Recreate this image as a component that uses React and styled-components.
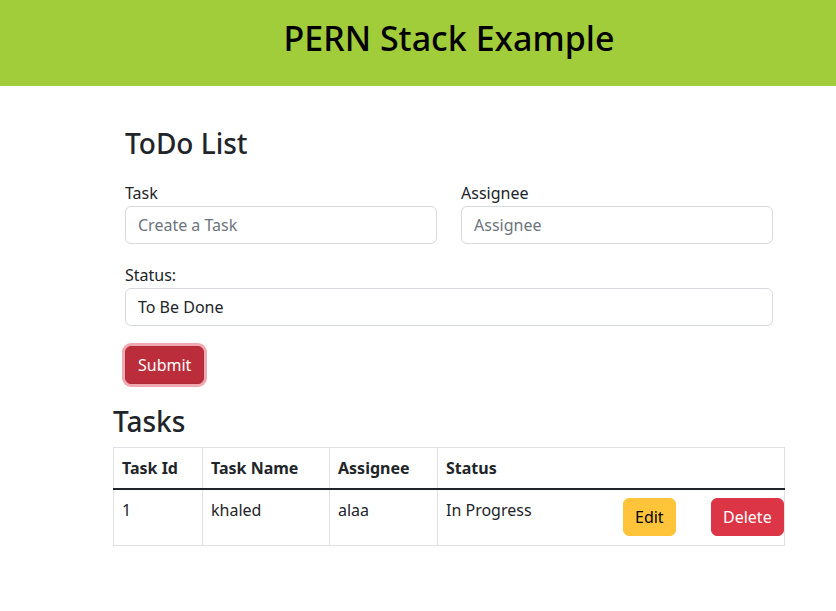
import React from "react";
import styled, { createGlobalStyle } from "styled-components";

const Global = createGlobalStyle`
  html, body { margin: 0; padding: 0; background: #fff; }
  body {
    font-family: "Noto Sans", "Open Sans", sans-serif;
    font-size: 16px;
    line-height: 1.5;
    color: #212529;
  }
  * { box-sizing: border-box; }
`;

const Banner = styled.header`
  height: 86px;
  background: #a2cd3a;
  display: flex;
  align-items: center;
  justify-content: center;
  padding-left: 62px;
  padding-bottom: 10px;
`;

const BannerTitle = styled.h1`
  margin: 0;
  font-size: 34px;
  font-weight: 500;
  line-height: 1.2;
  color: #000;
`;

const Main = styled.main`
  width: 672px;
  margin-left: 113px;
`;

const FormCard = styled.form`
  padding: 41px 12px 0;
`;

const Heading = styled.h3`
  margin: 0 0 ${p => p.$mb || 0}px;
  font-size: 28px;
  font-weight: 500;
  line-height: 1.2;
`;

const FieldRow = styled.div`
  display: grid;
  grid-template-columns: ${p => (p.$cols === 2 ? "1fr 1fr" : "1fr")};
  column-gap: 24px;
  margin-bottom: ${p => p.$mb || 0}px;
`;

const Field = styled.div`
  display: flex;
  flex-direction: column;
`;

const Label = styled.label`
  display: block;
  font-size: 16px;
  line-height: 24px;
  margin-bottom: 1px;
`;

const Input = styled.input`
  height: 38px;
  width: 100%;
  padding: 6px 12px;
  font-family: inherit;
  font-size: 16px;
  color: #212529;
  background: #fff;
  border: 1px solid #d6d9dd;
  border-radius: 6px;
  outline: none;
  &::placeholder { color: #6c757d; }
`;

const Btn = styled.button`
  height: 38px;
  padding: 0 ${p => p.$px || 12}px;
  font-family: inherit;
  font-size: 16px;
  line-height: 24px;
  border-radius: 6px;
  border: 1px solid ${p => p.$border};
  background: ${p => p.$bg};
  color: ${p => p.$fg || "#fff"};
  box-shadow: ${p => (p.$focus ? "0 0 0 3px rgba(225, 83, 97, 0.5)" : "none")};
  cursor: pointer;
`;

const SubmitWrap = styled.div`
  margin-top: 20px;
`;

const TasksSection = styled.section`
  padding-top: 21px;
`;

const Table = styled.table`
  width: 672px;
  border-collapse: collapse;
  margin-top: 9px;
  border: 1px solid #dee2e6;
  table-layout: fixed;
`;

const Th = styled.th`
  text-align: left;
  font-weight: 700;
  padding: 8px;
  line-height: 24px;
  border-left: 1px solid #dee2e6;
  border-bottom: 2px solid #212529;
  width: ${p => (p.$w ? `${p.$w}px` : "auto")};
`;

const Td = styled.td`
  padding: 8px;
  vertical-align: top;
  line-height: 24px;
  border-left: 1px solid #dee2e6;
  height: 56px;
`;

const StatusCell = styled.div`
  display: grid;
  grid-template-columns: 177px 88px auto;
  align-items: start;
`;

export default function App() {
  return (
    <>
      <Global />
      <Banner>
        <BannerTitle>PERN Stack Example</BannerTitle>
      </Banner>
      <Main>
        <FormCard onSubmit={e => e.preventDefault()}>
          <Heading $mb={20}>ToDo List</Heading>
          <FieldRow $cols={2} $mb={19}>
            <Field>
              <Label>Task</Label>
              <Input placeholder="Create a Task" />
            </Field>
            <Field>
              <Label>Assignee</Label>
              <Input placeholder="Assignee" />
            </Field>
          </FieldRow>
          <FieldRow>
            <Field>
              <Label>Status:</Label>
              <Input defaultValue="To Be Done" />
            </Field>
          </FieldRow>
          <SubmitWrap>
            <Btn type="submit" $bg="#bb2d3b" $border="#b02a37" $focus>
              Submit
            </Btn>
          </SubmitWrap>
        </FormCard>
        <TasksSection>
          <Heading>Tasks</Heading>
          <Table>
            <thead>
              <tr>
                <Th $w={89}>Task Id</Th>
                <Th $w={127}>Task Name</Th>
                <Th $w={108}>Assignee</Th>
                <Th>Status</Th>
              </tr>
            </thead>
            <tbody>
              <tr>
                <Td>1</Td>
                <Td>khaled</Td>
                <Td>alaa</Td>
                <Td>
                  <StatusCell>
                    <span>In Progress</span>
                    <div>
                      <Btn $bg="#ffc43a" $border="#ffc43a" $fg="#000" $px={11}>Edit</Btn>
                    </div>
                    <div>
                      <Btn $bg="#dc3545" $border="#dc3545" $px={11}>Delete</Btn>
                    </div>
                  </StatusCell>
                </Td>
              </tr>
            </tbody>
          </Table>
        </TasksSection>
      </Main>
    </>
  );
}
